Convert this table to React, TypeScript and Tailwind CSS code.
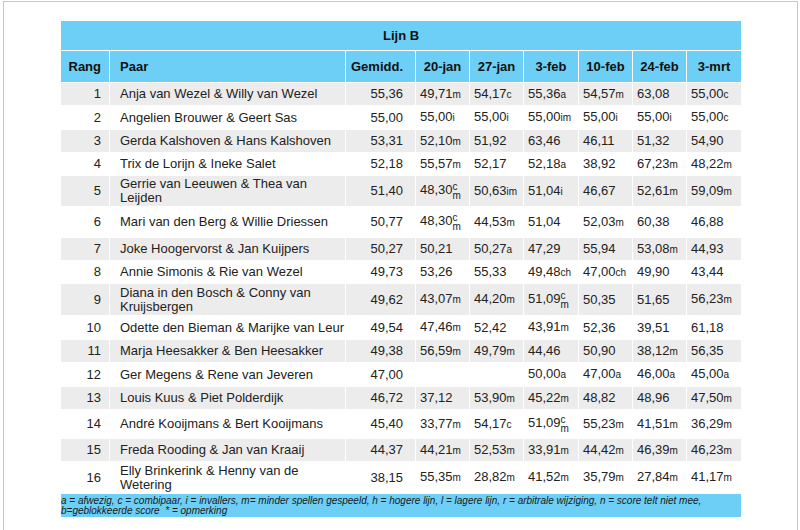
import React from "react";

type Row = {
  rang: number;
  paar: string;
  gem: string;
  scores: string[];
  h: string;
};

const dates = ["20-jan", "27-jan", "3-feb", "10-feb", "24-feb", "3-mrt"];

// row heights follow the reference: white rows carry the 1px white rule, two-line rows and c/m rows are taller
const rows: Row[] = [
  { rang: 1, paar: "Anja van Wezel & Willy van Wezel", gem: "55,36", scores: ["49,71m", "54,17c", "55,36a", "54,57m", "63,08", "55,00c"], h: "h-[23px]" },
  { rang: 2, paar: "Angelien Brouwer & Geert Sas", gem: "55,00", scores: ["55,00i", "55,00i", "55,00im", "55,00i", "55,00i", "55,00c"], h: "h-[24px]" },
  { rang: 3, paar: "Gerda Kalshoven & Hans Kalshoven", gem: "53,31", scores: ["52,10m", "51,92", "63,46", "46,11", "51,32", "54,90"], h: "h-[23px]" },
  { rang: 4, paar: "Trix de Lorijn & Ineke Salet", gem: "52,18", scores: ["55,57m", "52,17", "52,18a", "38,92", "67,23m", "48,22m"], h: "h-[23px]" },
  { rang: 5, paar: "Gerrie van Leeuwen & Thea van Leijden", gem: "51,40", scores: ["48,30cm", "50,63im", "51,04i", "46,67", "52,61m", "59,09m"], h: "h-[31px]" },
  { rang: 6, paar: "Mari van den Berg & Willie Driessen", gem: "50,77", scores: ["48,30cm", "44,53m", "51,04", "52,03m", "60,38", "46,88"], h: "h-[31px]" },
  { rang: 7, paar: "Joke Hoogervorst & Jan Kuijpers", gem: "50,27", scores: ["50,21", "50,27a", "47,29", "55,94", "53,08m", "44,93"], h: "h-[23px]" },
  { rang: 8, paar: "Annie Simonis & Rie van Wezel", gem: "49,73", scores: ["53,26", "55,33", "49,48ch", "47,00ch", "49,90", "43,44"], h: "h-[23px]" },
  { rang: 9, paar: "Diana in den Bosch & Conny van Kruijsbergen", gem: "49,62", scores: ["43,07m", "44,20m", "51,09cm", "50,35", "51,65", "56,23m"], h: "h-[32px]" },
  { rang: 10, paar: "Odette den Bieman & Marijke van Leur", gem: "49,54", scores: ["47,46m", "52,42", "43,91m", "52,36", "39,51", "61,18"], h: "h-[24px]" },
  { rang: 11, paar: "Marja Heesakker & Ben Heesakker", gem: "49,38", scores: ["56,59m", "49,79m", "44,46", "50,90", "38,12m", "56,35"], h: "h-[23px]" },
  { rang: 12, paar: "Ger Megens & Rene van Jeveren", gem: "47,00", scores: ["", "", "50,00a", "47,00a", "46,00a", "45,00a"], h: "h-[24px]" },
  { rang: 13, paar: "Louis Kuus & Piet Polderdijk", gem: "46,72", scores: ["37,12", "53,90m", "45,22m", "48,82", "48,96", "47,50m"], h: "h-[23px]" },
  { rang: 14, paar: "André Kooijmans & Bert Kooijmans", gem: "45,40", scores: ["33,77m", "54,17c", "51,09cm", "55,23m", "41,51m", "36,29m"], h: "h-[29px]" },
  { rang: 15, paar: "Freda Rooding & Jan van Kraaij", gem: "44,37", scores: ["44,21m", "52,53m", "33,91m", "44,42m", "46,39m", "46,23m"], h: "h-[23px]" },
  { rang: 16, paar: "Elly Brinkerink & Henny van de Wetering", gem: "38,15", scores: ["55,35m", "28,82m", "41,52m", "35,79m", "27,84m", "41,17m"], h: "h-[32px]" },
];

function Score({ value }: { value: string }) {
  const m = value.match(/^([\d,]+)(.*)$/);
  if (!m) return null;
  const [, num, suffix] = m;
  return (
    <>
      {num}
      {suffix === "cm" ? (
        <span className="inline-flex flex-col text-[10px] leading-[9px] align-[4px]">
          <span>c</span>
          <span>m</span>
        </span>
      ) : (
        suffix && <span className="text-[10px]">{suffix}</span>
      )}
    </>
  );
}

const cell = "border-r border-b border-white";

export default function App() {
  return (
    <div
      className="ml-[3px] mt-[1px] h-[529px] w-[795px] border-t border-l border-r border-[#c8c8c8] bg-white pl-[57px] pt-[19px] text-[13px] leading-[14px] text-[#222]"
      style={{ fontFamily: '"Liberation Sans", Arial, sans-serif' }}
    >
      <table className="w-[680px] table-fixed border-separate border-spacing-0">
        <colgroup>
          <col className="w-[49px]" />
          <col className="w-[236px]" />
          <col className="w-[70px]" />
          <col className="w-[54px]" />
          <col className="w-[54px]" />
          <col className="w-[55px]" />
          <col className="w-[54px]" />
          <col className="w-[54px]" />
          <col className="w-[54px]" />
        </colgroup>
        <thead>
          <tr className="h-[30px] bg-[#6dcff6]">
            <th colSpan={9} className="border-b border-white text-center font-bold text-[#111]">
              Lijn B
            </th>
          </tr>
          <tr className="h-[32px] bg-[#6dcff6] font-bold text-[#111]">
            <th className={`${cell} pr-[8px] text-right`}>Rang</th>
            <th className={`${cell} pl-[10px] text-left`}>Paar</th>
            <th className={`${cell} pr-[12px] text-right`}>Gemidd.</th>
            {dates.map((d, i) => (
              <th key={d} className={`${i === 5 ? "border-b border-white" : cell} text-center`}>
                {d}
              </th>
            ))}
          </tr>
        </thead>
        <tbody>
          {rows.map((r, idx) => (
            <tr key={r.rang} className={`${r.h} ${idx % 2 === 0 ? "bg-[#ececec]" : "bg-white"}`}>
              <td className={`${cell} py-[1px] pr-[8px] text-right`}>{r.rang}</td>
              <td className={`${cell} py-[1px] pl-[10px] pr-[1px] text-left`}>{r.paar}</td>
              <td className={`${cell} py-[1px] pr-[12px] text-right`}>{r.gem}</td>
              {r.scores.map((s, i) => (
                <td
                  key={i}
                  className={`${i === 5 ? "border-b border-white" : cell} whitespace-nowrap py-[1px] pl-[4px] text-left`}
                >
                  <Score value={s} />
                </td>
              ))}
            </tr>
          ))}
          <tr className="h-[23px] bg-[#6dcff6]">
            <td colSpan={9} className="py-[1px] text-left text-[10px] italic leading-[10px] text-[#1a1a1a]">
              a = afwezig, c = combipaar, i = invallers, m= minder spellen gespeeld, h = hogere lijn, l = lagere lijn, r = arbitrale wijziging, n = score telt niet mee,
              <br />
              b=geblokkeerde score&nbsp; * = opmerking
            </td>
          </tr>
        </tbody>
      </table>
    </div>
  );
}
